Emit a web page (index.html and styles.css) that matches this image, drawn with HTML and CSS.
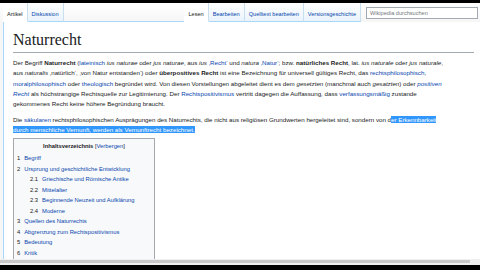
FILE: index.html
```html
<!DOCTYPE html>
<html lang="de">
<head>
    <meta charset="UTF-8">
    <title>Naturrecht – Wikipedia</title>
    <link rel="stylesheet" href="styles.css">
</head>
<body>

<div class="screen">
    <div class="topbar"></div>

    <div class="header">
        <div class="tabs">
            <span class="tab active">Artikel</span>
            <span class="tab">Diskussion</span>
        </div>
        <div class="header-fill"></div>
        <div class="tabs">
            <span class="tab active">Lesen</span>
            <span class="tab">Bearbeiten</span>
            <span class="tab">Quelltext bearbeiten</span>
            <span class="tab">Versionsgeschichte</span>
        </div>
        <div class="search">Wikipedia durchsuchen</div>
    </div>

    <div class="content">
        <h1 class="page-title">Naturrecht</h1>

        <p>Der Begriff <b>Naturrecht</b> (<a href="#">lateinisch</a> <i>ius naturae</i> oder <i>jus naturae</i>, aus <i>ius</i> <a href="#">‚Recht‘</a> und <i>natura</i> <a href="#">‚Natur‘</a>; bzw. <b>natürliches Recht</b>, lat. <i>ius naturale</i> oder <i>jus naturale</i>,<br>
        aus <i>naturalis</i> ‚natürlich‘, ‚von Natur entstanden‘) oder <b>überpositives Recht</b> ist eine Bezeichnung für universell gültiges Recht, das <a href="#">rechtsphilosophisch</a>,<br>
        <a href="#">moralphilosophisch</a> oder <a href="#">theologisch</a> begründet wird. Von diesen Vorstellungen abgeleitet dient es dem <i>gesetzten</i> (manchmal auch <i>gesatzten</i>) oder <a href="#"><i>positiven</i></a><br>
        <a href="#"><i>Recht</i></a> als höchstrangige Rechtsquelle zur Legitimierung. Der <a href="#">Rechtspositivismus</a> vertritt dagegen die Auffassung, dass <a href="#">verfassungsmäßig</a> zustande<br>
        gekommenes Recht keine höhere Begründung braucht.</p>

        <p>Die <a href="#">säkularen</a> rechtsphilosophischen Ausprägungen des Naturrechts, die nicht aus religiösen Grundwerten hergeleitet sind, sondern von d<span class="sel">er Erkennbarkeit<br>
        durch menschliche Vernunft, werden als Vernunftrecht bezeichnet.</span></p>

        <div class="toc">
            <div class="toc-title"><b>Inhaltsverzeichnis</b> <span class="toc-toggle">[<a href="#">Verbergen</a>]</span></div>
            <ul>
                <li><span class="num">1</span><a href="#">Begriff</a></li>
                <li><span class="num">2</span><a href="#">Ursprung und geschichtliche Entwicklung</a>
                    <ul>
                        <li><span class="num">2.1</span><a href="#">Griechische und Römische Antike</a></li>
                        <li><span class="num">2.2</span><a href="#">Mittelalter</a></li>
                        <li><span class="num">2.3</span><a href="#">Beginnende Neuzeit und Aufklärung</a></li>
                        <li><span class="num">2.4</span><a href="#">Moderne</a></li>
                    </ul>
                </li>
                <li><span class="num">3</span><a href="#">Quellen des Naturrechts</a></li>
                <li><span class="num">4</span><a href="#">Abgrenzung zum Rechtspositivismus</a></li>
                <li><span class="num">5</span><a href="#">Bedeutung</a></li>
                <li><span class="num">6</span><a href="#">Kritik</a></li>
            </ul>
        </div>
    </div>

    <div class="hscroll"><div class="hscroll-thumb"></div></div>
    <div class="bottombar"></div>
</div>

</body>
</html>
```

FILE: styles.css
```css
body {
    margin: 0;
    background-color: #000;
    font-family: "Liberation Sans", Arial, sans-serif;
    color: #202122;
}
.screen {
    width: 480px;
    height: 270px;
    overflow: hidden;
    background-color: #f6f6f6;
    display: flex;
    flex-direction: column;
}
.topbar {
    height: 3px;
    background-color: #000;
}
.header {
    height: 19px;
    display: flex;
    align-items: stretch;
    background: linear-gradient(#ffffff, #f6f6f6);
    padding-left: 3px;
}
.header-fill {
    flex: 1;
    border-bottom: 1px solid #a7d7f9;
}
.tabs {
    display: flex;
}
.tab {
    font-size: 5.6px;
    color: #0645ad;
    padding: 8px 4px 0 4px;
    background: linear-gradient(#ffffff, #eaf3fb);
    border-right: 1px solid #c8dff0;
    border-bottom: 1px solid #a7d7f9;
}
.tab.active {
    color: #202122;
    background: #ffffff;
    border-bottom-color: #ffffff;
}
.search {
    width: 112px;
    margin: 4px 2px 0 5px;
    height: 12px;
    border: 1px solid #a2a9b1;
    background-color: #fff;
    font-size: 5.6px;
    color: #72777d;
    padding: 2px 0 0 3px;
    box-sizing: border-box;
    align-self: flex-start;
}
.content {
    flex: 1;
    margin-left: 3px;
    background-color: #fff;
    border-left: 1px solid #a7d7f9;
    padding: 0 6px 0 9px;
    overflow: hidden;
}
.page-title {
    font-family: "Liberation Serif", Georgia, serif;
    font-weight: normal;
    font-size: 16px;
    margin: 8px 0 0 0;
    padding-bottom: 3px;
    border-bottom: 1px solid #a2a9b1;
    line-height: 1.2;
}
p {
    font-size: 6.2px;
    line-height: 10.3px;
    margin: 5px 0 0 0;
    white-space: nowrap;
}
a {
    color: #0645ad;
    text-decoration: none;
}
.sel {
    background-color: #3297fd;
    color: #fff;
}
.toc {
    display: inline-block;
    width: 142px;
    margin-top: 3px;
    border: 1px solid #a2a9b1;
    background-color: #f8f9fa;
    padding: 2px 3px 6px 3px;
    box-sizing: border-box;
    font-size: 5.8px;
}
.toc-title {
    text-align: center;
    line-height: 10px;
    margin-bottom: 2px;
}
.toc-toggle {
    font-weight: normal;
}
.toc ul {
    list-style: none;
    margin: 0;
    padding: 0;
}
.toc ul ul {
    padding-left: 13px;
}
.toc li {
    line-height: 10.5px;
    white-space: nowrap;
}
.num {
    display: inline-block;
    margin-right: 4px;
    color: #202122;
}
.hscroll {
    height: 5px;
    background-color: #f0f0f0;
    padding: 1px 10px 0 0;
}
.hscroll-thumb {
    height: 3px;
    background-color: #c8c8c8;
}
.bottombar {
    height: 5px;
    background-color: #000;
}
```
